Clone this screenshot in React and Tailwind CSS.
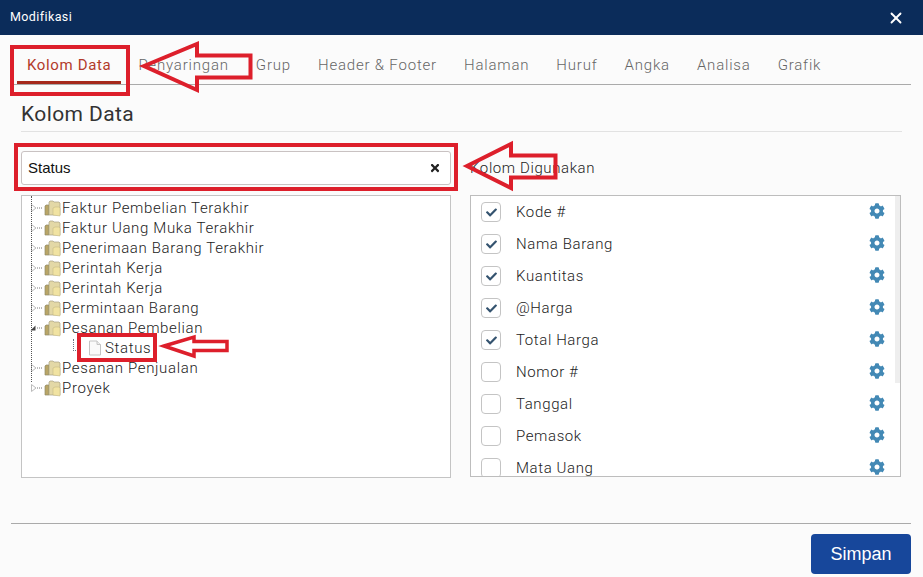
import React from 'react';
import { X } from 'lucide-react';
import { FaCog, FaTimes, FaCheck } from 'react-icons/fa';

const tabs = ['Kolom Data', 'Penyaringan', 'Grup', 'Header & Footer', 'Halaman', 'Huruf', 'Angka', 'Analisa', 'Grafik'];

const treeItems = [
  { label: 'Faktur Pembelian Terakhir' },
  { label: 'Faktur Uang Muka Terakhir' },
  { label: 'Penerimaan Barang Terakhir' },
  { label: 'Perintah Kerja' },
  { label: 'Perintah Kerja' },
  { label: 'Permintaan Barang' },
  { label: 'Pesanan Pembelian', open: true },
  { label: 'Status', leaf: true },
  { label: 'Pesanan Penjualan' },
  { label: 'Proyek' },
];

const columns = [
  { label: 'Kode #', checked: true },
  { label: 'Nama Barang', checked: true },
  { label: 'Kuantitas', checked: true },
  { label: '@Harga', checked: true },
  { label: 'Total Harga', checked: true },
  { label: 'Nomor #' },
  { label: 'Tanggal' },
  { label: 'Pemasok' },
  { label: 'Mata Uang' },
];

const Folder = () => (
  <svg width="17" height="17" viewBox="0 0 17 17" className="shrink-0">
    <path d="M1 15V6l1-1h3v10z" fill="#b9a566" stroke="#8f8a66" strokeWidth="0.7" />
    <path d="M5 15V2l1-1h3l1 1h5l1 1v12z" fill="#e3d8a6" stroke="#a8a184" strokeWidth="0.7" />
    <path d="M9 15V8l2-1h4l1 1v8z" fill="#f1e3a2" stroke="#bdb07c" strokeWidth="0.5" />
  </svg>
);

const Page = () => (
  <svg width="14" height="16" viewBox="0 0 14 16" className="shrink-0">
    <path d="M1.5 1h7.5l3.5 3.5V15h-11z" fill="#fafafa" stroke="#c4c4c4" />
    <path d="M9 1v3.5h3.5" fill="#eee" stroke="#c4c4c4" />
  </svg>
);

const Toggle = ({ open }) => (
  <svg width="14" height="10" viewBox="0 0 14 10" className="shrink-0">
    {open ? (
      <path d="M0.5 7.5L5.5 2.5V7.5z" fill="#444" />
    ) : (
      <path d="M1.5 1.5L6 5L1.5 8.5z" fill="#fff" stroke="#bbb" />
    )}
    <path d="M7 5h6" stroke="#777" strokeDasharray="1 1" />
  </svg>
);

const TreeRow = ({ item }) => {
  if (item.leaf) {
    return (
      <div className="flex h-5 items-center pl-[51px]">
        <span className="mr-[10px] h-[12px] w-[5px] -translate-y-[3px] border-l border-b border-dotted border-gray-500" />
        <Page />
        <span className="ml-[3px]">{item.label}</span>
      </div>
    );
  }
  return (
    <div className="flex h-5 items-center pl-[8px]">
      <Toggle open={item.open} />
      <Folder />
      <span className="ml-[1px] whitespace-nowrap">{item.label}</span>
    </div>
  );
};

const ColumnRow = ({ item }) => (
  <div className="flex h-8 shrink-0 items-center pl-[10px] pr-[15px]">
    <span className="flex h-5 w-5 items-center justify-center rounded-[4px] border border-[#c4c4c4] bg-white text-[#34536f]">
      {item.checked && <FaCheck size={11} />}
    </span>
    <span className="ml-[15px] flex-1 text-[15px] tracking-[0.6px] text-[#222]">{item.label}</span>
    <FaCog size={16} className="-translate-y-px text-[#4389b5]" />
  </div>
);

// Red annotations painted on top of the screenshot
const Annotations = () => (
  <>
    <div className="absolute left-[10px] top-[45px] h-[51px] w-[120px] border-[4px] border-[#dd1f2b]" />
    <div className="absolute left-[14px] top-[143px] h-[48px] w-[444px] border-[4px] border-[#dd1f2b]" />
    <div className="absolute left-[77px] top-[333px] h-[29px] w-[80px] border-[4px] border-[#dd1f2b]" />
    <svg width="923" height="577" className="pointer-events-none absolute left-0 top-0">
      <g fill="none" stroke="#dd1f2b" strokeWidth="4" strokeLinejoin="miter">
        <path d="M144 66L197 44V55.5H250.5V77.5H197V90z" />
        <path d="M467 166L511 144V155.5H555.5V177.5H511V188z" />
        <path d="M164 346L194 337V341.5H227V350.5H194V356z" strokeWidth="3.5" />
      </g>
    </svg>
  </>
);

const App = () => {
  return (
    <div className="relative flex h-[577px] w-[923px] flex-col overflow-hidden bg-[#fbfbfb] font-['Roboto',sans-serif] font-light text-[#222]">
      {/* Title bar */}
      <div className="flex h-[35px] shrink-0 items-center justify-between bg-[#0b2c5a] pl-[10px] pr-[18px] text-white">
        <span className="text-[12.5px] font-normal tracking-[0.4px]">Modifikasi</span>
        <X size={18} strokeWidth={2.5} />
      </div>

      {/* Tabs */}
      <div className="ml-[11px] mr-[12px] mt-[11px] flex h-[39px] shrink-0 gap-[7px] border-b border-[#aaa] pl-[6px]">
        {tabs.map((tab, i) => (
          <div
            key={tab}
            className={`flex h-[38px] items-center px-[10px] text-[15px] ${
              i === 0
                ? 'border-b-[3px] border-[#a5281b] pt-[3px] font-normal tracking-[0.65px] text-[#b23a2b]'
                : 'tracking-[0.81px] text-[#666]'
            }`}
          >
            {tab}
          </div>
        ))}
      </div>

      <div className="flex flex-1 flex-col px-[21px]">
        <h2 className="flex h-[47px] shrink-0 items-end border-b border-[#e2e2e2] pb-[1px] text-[21px] font-normal tracking-[0.4px] text-[#333]">
          Kolom Data
        </h2>

        <div className="mt-[19px] flex gap-[19px]">
          {/* Left column */}
          <div className="w-[430px]">
            <div className="flex h-[34px] items-center justify-between rounded-[3px] border border-[#c9c2c2] bg-white pl-[6px] pr-[9px] font-['Liberation_Sans',sans-serif] text-[15px] font-normal text-[#111]">
              <span>Status</span>
              <FaTimes size={12} className="text-[#222]" />
            </div>
            <div className="relative mt-[10px] h-[283px] border border-[#c4c4c4] bg-white pt-[2px] text-[15px] tracking-[0.65px] text-[#222]">
              <span className="absolute bottom-[95px] left-[9px] top-0 border-l border-dotted border-[#555]" />
              {treeItems.map((item, i) => (
                <TreeRow key={i} item={item} />
              ))}
            </div>
          </div>

          {/* Right column */}
          <div className="w-[431px]">
            <div className="flex h-[34px] items-center text-[15px] tracking-[0.6px] text-[#222]">Kolom Digunakan</div>
            <div className="relative mt-[10px] flex h-[282px] flex-col overflow-hidden border border-[#bdbdbd] bg-white">
              <span className="absolute right-0 top-0 h-[187px] w-[5px] bg-[#eeeeee]" />
              {columns.map((item) => (
                <ColumnRow key={item.label} item={item} />
              ))}
            </div>
          </div>
        </div>
      </div>

      {/* Footer */}
      <div className="ml-[11px] mr-[12px] flex h-[54px] shrink-0 items-start justify-end border-t border-[#aaa] pt-[10px]">
        <button className="flex h-[40px] w-[100px] items-center justify-center rounded-[4px] bg-[#17479b] font-['Liberation_Sans',sans-serif] text-[18px] font-medium text-white">
          Simpan
        </button>
      </div>

      <Annotations />
    </div>
  );
};

export default App;
